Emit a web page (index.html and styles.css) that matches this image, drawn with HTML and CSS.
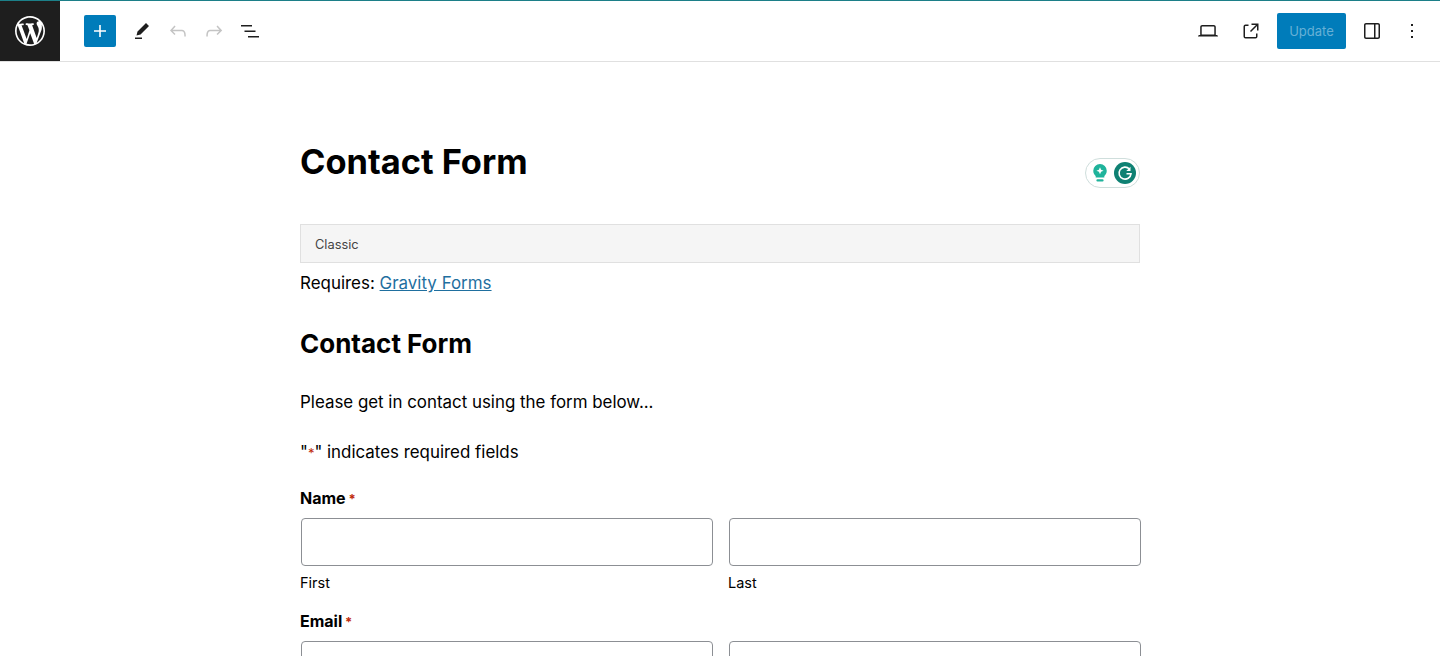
FILE: index.html
```html
<!DOCTYPE html>
<html lang="en">

<head>
    <meta charset="utf-8">
    <title>Contact Form</title>
    <link rel="stylesheet" href="styles.css">
</head>

<body>
    <header class="topbar">
        <a class="wp-logo">
            <svg viewBox="0 0 20 20" width="30" height="30"><path fill="#fff" d="M20 10c0-5.51-4.49-10-10-10C4.48 0 0 4.49 0 10c0 5.52 4.48 10 10 10 5.51 0 10-4.48 10-10zM7.78 15.37L4.37 6.22c.55-.02 1.17-.08 1.17-.08.5-.06.44-1.13-.06-1.11 0 0-1.45.11-2.37.11-.18 0-.37 0-.58-.01C4.12 2.69 6.87 1.11 10 1.11c2.33 0 4.45.87 6.05 2.34-.68-.11-1.65.39-1.65 1.58 0 .74.45 1.36.9 2.1.35.61.55 1.36.55 2.46 0 1.49-1.4 5-1.4 5l-3.03-8.37c.54-.02.82-.17.82-.17.5-.05.44-1.25-.06-1.22 0 0-1.44.12-2.38.12-.87 0-2.33-.12-2.33-.12-.5-.03-.56 1.2-.06 1.22l.92.08 1.26 3.41zM17.41 10c.24-.64.74-1.87.43-4.25.7 1.29 1.05 2.71 1.05 4.25 0 3.29-1.73 6.24-4.4 7.78.97-2.59 1.94-5.2 2.92-7.78zM6.1 18.09C3.12 16.65 1.11 13.53 1.11 10c0-1.3.23-2.48.72-3.59C3.25 10.3 4.67 14.2 6.1 18.09zm4.03-6.63l2.58 6.98c-.86.29-1.76.45-2.71.45-.79 0-1.57-.11-2.29-.33.81-2.38 1.62-4.74 2.42-7.1z"/></svg>
        </a>
        <div class="tools-left">
            <button class="add-btn">
                <svg viewBox="0 0 24 24" width="24" height="24"><path fill="#fff" d="M18 11.2h-5.2V6h-1.6v5.2H6v1.6h5.2V18h1.6v-5.2H18z"/></svg>
            </button>
            <button class="icon-btn">
                <svg viewBox="0 0 24 24" width="24" height="24"><path d="m19 7-3-3-8.5 8.5-1 4 4-1L19 7Zm-7 11.5H5V20h7v-1.5Z"/></svg>
            </button>
            <button class="icon-btn disabled">
                <svg viewBox="0 0 24 24" width="24" height="24"><path d="M18.3 11.7c-.6-.6-1.4-.9-2.3-.9H6.7l2.9-3.3-1.1-1-4.5 5L8.5 16l1-1-2.7-2.7H16c.5 0 .9.2 1.3.5 1 1 1 3.4 1 4.5v.3h1.5v-.2c0-1.5 0-4.3-1.5-5.7z"/></svg>
            </button>
            <button class="icon-btn disabled">
                <svg viewBox="0 0 24 24" width="24" height="24"><path d="M15.6 6.5l-1.1 1 2.9 3.3H8c-.9 0-1.7.3-2.3.9-1.4 1.5-1.4 4.2-1.4 5.6v.2h1.5v-.3c0-1.1 0-3.5 1-4.5.3-.3.7-.5 1.3-.5h9.2L14.5 15l1.1 1.1 4.6-4.6-4.6-5z"/></svg>
            </button>
            <button class="icon-btn">
                <svg viewBox="0 0 24 24" width="24" height="24"><path d="M3 6h11v1.5H3V6Zm3.5 5.5h11V13h-11v-1.5ZM21 17H10v1.5h11V17Z"/></svg>
            </button>
        </div>
        <div class="tools-right">
            <button class="icon-btn view-btn">
                <svg viewBox="0 0 24 24" width="24" height="24"><path d="M20.5 16h-.7V8c0-1.1-.9-2-2-2H6.2c-1.1 0-2 .9-2 2v8h-.7c-.8 0-1.5.7-1.5 1.5h20c0-.8-.7-1.5-1.5-1.5zM5.7 8c0-.3.2-.5.5-.5h11.6c.3 0 .5.2.5.5v7.6H5.7V8z"/></svg>
            </button>
            <button class="icon-btn preview-btn">
                <svg viewBox="0 0 24 24" width="24" height="24"><path d="M19.5 4.5h-7V6h4.44l-5.97 5.97 1.06 1.06L18 7.06v4.44h1.5v-7Zm-13 1a2 2 0 0 0-2 2v10a2 2 0 0 0 2 2h10a2 2 0 0 0 2-2v-3H17v3a.5.5 0 0 1-.5.5h-10a.5.5 0 0 1-.5-.5v-10a.5.5 0 0 1 .5-.5h3V5.5h-3Z"/></svg>
            </button>
            <button class="update-btn">Update</button>
            <button class="icon-btn panel-btn">
                <svg viewBox="0 0 24 24" width="24" height="24"><path fill-rule="evenodd" d="M18 4H6c-1.1 0-2 .9-2 2v12c0 1.1.9 2 2 2h12c1.1 0 2-.9 2-2V6c0-1.1-.9-2-2-2zm-4 14.5H6c-.3 0-.5-.2-.5-.5V6c0-.3.2-.5.5-.5h8v13zm4.5-.5c0 .3-.2.5-.5.5h-2.5v-13H18c.3 0 .5.2.5.5v12z"/></svg>
            </button>
            <button class="icon-btn more-btn">
                <svg viewBox="0 0 24 24" width="24" height="24"><path d="M13 19h-2v-2h2v2zm0-6h-2v-2h2v2zm0-6h-2V5h2v2z"/></svg>
            </button>
        </div>
    </header>

    <main class="editor">
        <div class="title-row">
            <h1 class="post-title">Contact Form</h1>
            <div class="grammarly">
                <svg viewBox="0 0 20 24" width="18" height="22">
                    <path fill="#1fb39b" d="M10 2a7.500 7.500 0 0 1 7.500 7.500c0 2.700-1.300 4.300-2.700 5.700V17H5.200v-1.800C3.800 13.800 2.500 12.200 2.500 9.500A7.500 7.500 0 0 1 10 2z"/>
                    <path fill="#fff" d="M10 5.500l1.200 2.800 2.800 1.200-2.800 1.200L10 13.500l-1.200-2.800L6 9.500l2.800-1.200z"/>
                    <rect fill="#1fb39b" x="6" y="19" width="8" height="2.500" rx="1.200"/>
                </svg>
                <svg viewBox="0 0 22 22" width="22" height="22">
                    <circle cx="11" cy="11" r="11" fill="#0e8173"/>
                    <path fill="none" stroke="#fff" stroke-width="1.600" d="M15.400 7A6 6 0 1 0 17 11.800h-4.500"/>
                    <path fill="#fff" d="M16.500 4.800v4.200h-4.200z"/>
                </svg>
            </div>
        </div>

        <div class="classic-label">Classic</div>
        <p class="requires">Requires: <a href="#">Gravity Forms</a></p>

        <h2 class="form-title">Contact Form</h2>
        <p class="form-desc">Please get in contact using the form below...</p>
        <p class="req-legend">"<span class="req">*</span>" indicates required fields</p>

        <div class="field">
            <div class="field-label">Name <span class="req">*</span></div>
            <div class="field-cols">
                <div>
                    <input class="text-input" type="text">
                    <label class="sub-label">First</label>
                </div>
                <div>
                    <input class="text-input" type="text">
                    <label class="sub-label">Last</label>
                </div>
            </div>
        </div>

        <div class="field">
            <div class="field-label">Email <span class="req">*</span></div>
            <div class="field-cols">
                <div>
                    <input class="text-input" type="text">
                </div>
                <div>
                    <input class="text-input" type="text">
                </div>
            </div>
        </div>
    </main>
</body>

</html>
```

FILE: styles.css
```css
* {
    box-sizing: border-box;
}

html,
body {
    height: 656px;
    overflow: hidden;
}

body {
    margin: 0;
    background-color: #fff;
    color: #000;
    font-family: "Inter", "Liberation Sans", sans-serif;
}

button {
    display: flex;
    align-items: center;
    justify-content: center;
    padding: 0;
    border: none;
    background: none;
}

/* top toolbar */
.topbar {
    display: flex;
    align-items: center;
    height: 62px;
    border-top: 1px solid #1c7f88;
    border-bottom: 1px solid #e0e0e0;
}

.wp-logo {
    display: flex;
    flex-shrink: 0;
    align-items: center;
    justify-content: center;
    width: 60px;
    height: 60px;
    background-color: #1e1e1e;
}

.tools-left {
    display: flex;
    align-items: center;
    margin-left: 24px;
}

.add-btn {
    width: 32px;
    height: 32px;
    margin-right: 8px;
    border-radius: 2px;
    background-color: #007cba;
}

.icon-btn {
    width: 36px;
    height: 36px;
    color: #1e1e1e;
}

.icon-btn svg {
    fill: currentColor;
}

.icon-btn.disabled {
    color: #c4c4c4;
}

.tools-right {
    display: flex;
    align-items: center;
    margin-left: auto;
    padding-right: 10px;
}

.view-btn {
    margin-right: 7px;
}

.preview-btn {
    margin-right: 8px;
}

.update-btn {
    width: 69px;
    height: 36px;
    margin-right: 8px;
    border-radius: 2px;
    background-color: #007cba;
    color: #66b0d6;
    font-family: "Inter", "Liberation Sans", sans-serif;
    font-size: 13px;
}

.panel-btn {
    margin-right: 4px;
}

/* post content */
.editor {
    width: 840px;
    margin: 0 auto;
}

.title-row {
    position: relative;
    padding-top: 78px;
}

.post-title {
    margin: 0;
    font-size: 34.4px;
    font-weight: 700;
    line-height: 44px;
}

.grammarly {
    position: absolute;
    top: 96px;
    right: 0;
    display: flex;
    align-items: center;
    gap: 5px;
    width: 55px;
    height: 30px;
    padding-left: 5px;
    border: 1px solid #cfdedc;
    border-radius: 15px;
    background-color: #fff;
}

.classic-label {
    height: 39px;
    margin-top: 40px;
    padding-left: 14px;
    border: 1px solid #e0e0e0;
    background-color: #f5f5f5;
    color: #444;
    font-size: 12.8px;
    line-height: 39px;
}

.requires {
    margin: 8px 0 0;
    font-size: 16.95px;
    line-height: 24px;
}

.requires a {
    color: #1f6f9f;
}

.form-title {
    margin: 32px 0 0;
    font-size: 26px;
    font-weight: 700;
    line-height: 34px;
}

.form-desc {
    margin: 29px 0 0;
    font-size: 16.9px;
    line-height: 24px;
}

.req-legend {
    margin: 26px 0 0;
    font-size: 16.9px;
    line-height: 24px;
}

.req {
    color: #c02b0a;
    font-size: 13px;
}

.field {
    margin-top: 21px;
}

.field + .field {
    margin-top: 17px;
}

.field-label {
    height: 24px;
    font-size: 16px;
    font-weight: 700;
    line-height: 24px;
}

.field-label .req {
    margin-left: -1px;
}

.field-cols {
    display: grid;
    grid-template-columns: 412px 412px;
    column-gap: 16px;
    margin-top: 8px;
}

.text-input {
    display: block;
    width: 412px;
    height: 48px;
    margin-left: 1px;
    border: 1px solid #8c8f94;
    border-radius: 4px;
    background-color: #fff;
}

.sub-label {
    display: block;
    margin-top: 8px;
    font-size: 14.5px;
    line-height: 18px;
}
```
